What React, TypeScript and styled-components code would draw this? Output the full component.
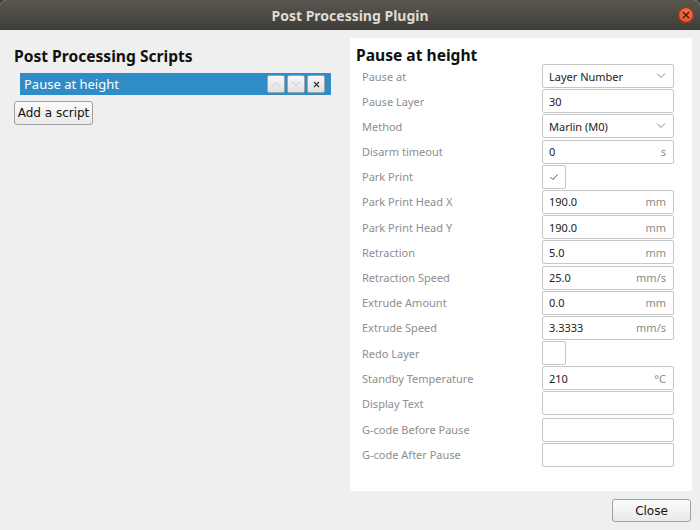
import React from "react";
import styled, { createGlobalStyle } from "styled-components";

const Global = createGlobalStyle`
  html, body { margin: 0; padding: 0; background: #3a3935; }
  body { font-family: "Noto Sans", "DejaVu Sans", sans-serif; }
  * { box-sizing: border-box; }
`;

const Window = styled.div`
  width: 700px;
  height: 530px;
  display: flex;
  flex-direction: column;
  background: #efefef;
  border-radius: 6px 6px 0 0;
  overflow: hidden;
`;

const TitleBar = styled.div`
  height: 30px;
  flex: none;
  position: relative;
  display: flex;
  align-items: center;
  justify-content: center;
  background: linear-gradient(#5a5750, #3e3d38);
  color: #dfdbd2;
  font: bold 14px "Noto Sans", sans-serif;
`;

const WinClose = styled.div`
  position: absolute;
  right: 6px;
  top: 7px;
  width: 16px;
  height: 16px;
  border-radius: 50%;
  background: radial-gradient(circle at 50% 35%, #f27747, #d9481a);
  box-shadow: 0 0 0 1px #7a3218 inset;
  display: flex;
  align-items: center;
  justify-content: center;
`;

const Main = styled.div`
  flex: 1;
  display: flex;
  padding: 8px 8px 0 0;
`;

const Left = styled.div`
  flex: 1;
  padding: 9px 0 0 14px;
  display: flex;
  flex-direction: column;
  align-items: flex-start;
`;

const Heading = styled.div`
  font: bold 15.6px "Noto Sans", sans-serif;
  color: #111;
  line-height: 18px;
  height: 18px;
`;

const ListItem = styled.div`
  margin: 8px 0 0 6px;
  width: 311px;
  height: 22px;
  background: #308cc6;
  color: #fff;
  font: 13px "Noto Sans", sans-serif;
  display: flex;
  align-items: center;
  padding: 0 6px 0 4px;
`;

const ItemName = styled.span`
  flex: 1;
`;

const MiniButtons = styled.div`
  display: flex;
  gap: 2px;
`;

const MiniButton = styled.div`
  width: 18px;
  height: 18px;
  border: 1px solid #a3a3a3;
  border-radius: 2px;
  background: linear-gradient(#f7f7f7, #e2e2e2);
  display: flex;
  align-items: center;
  justify-content: center;
`;

const PushButton = styled.button`
  height: 24px;
  width: 79px;
  padding: 0;
  border: 1px solid #a0a0a0;
  border-radius: 3px;
  background: linear-gradient(#fbfbfb, #e9e9e9);
  font: 12px "DejaVu Sans", sans-serif;
  color: #111;
`;

const AddButton = styled(PushButton)`
  margin-top: 6px;
`;

const Panel = styled.div`
  width: 342px;
  background: #fff;
  padding: 8px 0 0 6px;
  display: flex;
  flex-direction: column;
`;

const Form = styled.div`
  display: grid;
  grid-template-columns: 180px 132px;
  row-gap: 1.2px;
  padding-left: 6px;
  align-items: center;
`;

const Label = styled.div<{ $gap?: boolean }>`
  font: 11px "Noto Sans", sans-serif;
  color: #8e8e8e;
  margin-top: ${(p) => (p.$gap ? "1px" : "0")};
`;

const Field = styled.div<{ $gap?: boolean }>`
  height: 24px;
  border: 1px solid #c6c6c6;
  border-radius: 2px;
  background: #fff;
  display: flex;
  align-items: center;
  padding: 0 7px 0 6px;
  font: 11px "Noto Sans", sans-serif;
  color: #222;
  margin-top: ${(p) => (p.$gap ? "1px" : "0")};
`;

const Value = styled.span`
  flex: 1;
`;

const Unit = styled.span`
  color: #8a8a8a;
`;

const Check = styled.div`
  width: 24px;
  height: 24px;
  border: 1px solid #c6c6c6;
  border-radius: 2px;
  background: #fff;
  display: flex;
  align-items: center;
  justify-content: center;
`;

const Footer = styled.div`
  height: 39px;
  flex: none;
  display: flex;
  justify-content: flex-end;
  padding: 8px 9px 0 0;
`;

const CloseButton = styled(PushButton)`
  height: 23px;
`;

const Chevron = ({ up = false, color = "#777" }: { up?: boolean; color?: string }) => (
  <svg width="10" height="6" viewBox="0 0 10 6">
    <path d={up ? "M1 5.5 L5 1.5 L9 5.5" : "M1 0.5 L5 4.5 L9 0.5"} fill="none" stroke={color} strokeWidth="1" />
  </svg>
);

type Row = { label: string; kind: "select" | "text" | "check"; value?: string; unit?: string; checked?: boolean; gap?: boolean };

const rows: Row[] = [
  { label: "Pause at", kind: "select", value: "Layer Number" },
  { label: "Pause Layer", kind: "text", value: "30" },
  { label: "Method", kind: "select", value: "Marlin (M0)" },
  { label: "Disarm timeout", kind: "text", value: "0", unit: "s" },
  { label: "Park Print", kind: "check", checked: true },
  { label: "Park Print Head X", kind: "text", value: "190.0", unit: "mm" },
  { label: "Park Print Head Y", kind: "text", value: "190.0", unit: "mm" },
  { label: "Retraction", kind: "text", value: "5.0", unit: "mm" },
  { label: "Retraction Speed", kind: "text", value: "25.0", unit: "mm/s" },
  { label: "Extrude Amount", kind: "text", value: "0.0", unit: "mm" },
  { label: "Extrude Speed", kind: "text", value: "3.3333", unit: "mm/s" },
  { label: "Redo Layer", kind: "check", checked: false },
  { label: "Standby Temperature", kind: "text", value: "210", unit: "°C" },
  { label: "Display Text", kind: "text", value: "" },
  { label: "G-code Before Pause", kind: "text", value: "", gap: true },
  { label: "G-code After Pause", kind: "text", value: "" },
];

export default function App() {
  return (
    <>
      <Global />
      <Window>
        <TitleBar>
          Post Processing Plugin
          <WinClose>
            <svg width="8" height="8" viewBox="0 0 8 8">
              <path d="M1 1 L7 7 M7 1 L1 7" stroke="#3a1a0c" strokeWidth="1.4" />
            </svg>
          </WinClose>
        </TitleBar>
        <Main>
          <Left>
            <Heading>Post Processing Scripts</Heading>
            <ListItem>
              <ItemName>Pause at height</ItemName>
              <MiniButtons>
                <MiniButton>
                  <Chevron up color="#c4c4c4" />
                </MiniButton>
                <MiniButton>
                  <Chevron color="#c4c4c4" />
                </MiniButton>
                <MiniButton>
                  <svg width="7" height="7" viewBox="0 0 7 7">
                    <path d="M1 1 L6 6 M6 1 L1 6" stroke="#333" strokeWidth="1.2" />
                  </svg>
                </MiniButton>
              </MiniButtons>
            </ListItem>
            <AddButton>Add a script</AddButton>
          </Left>
          <Panel>
            <Heading>Pause at height</Heading>
            <Form>
              {rows.map((r) => (
                <React.Fragment key={r.label}>
                  <Label $gap={r.gap}>{r.label}</Label>
                  {r.kind === "check" ? (
                    <Check>
                      {r.checked && (
                        <svg width="10" height="8" viewBox="0 0 10 8">
                          <path d="M1.5 4 L4 6.5 L8.5 1.5" fill="none" stroke="#555" strokeWidth="1" />
                        </svg>
                      )}
                    </Check>
                  ) : (
                    <Field $gap={r.gap}>
                      <Value>{r.value}</Value>
                      {r.kind === "select" ? <Chevron color="#888" /> : r.unit && <Unit>{r.unit}</Unit>}
                    </Field>
                  )}
                </React.Fragment>
              ))}
            </Form>
          </Panel>
        </Main>
        <Footer>
          <CloseButton>Close</CloseButton>
        </Footer>
      </Window>
    </>
  );
}
